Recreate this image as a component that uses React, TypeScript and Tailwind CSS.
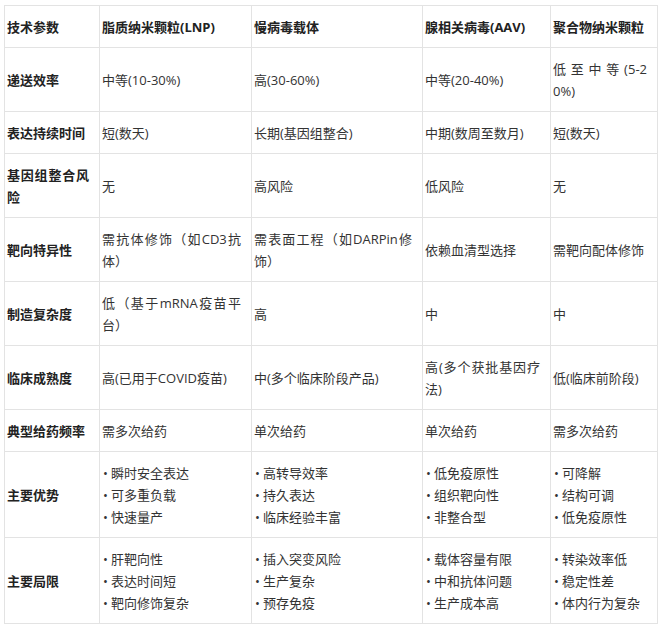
import React from 'react'

type Cell = string | string[]

interface Row {
  label: string
  cells: Cell[]
}

const headers = ['技术参数', '脂质纳米颗粒(LNP)', '慢病毒载体', '腺相关病毒(AAV)', '聚合物纳米颗粒']

const rows: Row[] = [
  { label: '递送效率', cells: ['中等(10-30%)', '高(30-60%)', '中等(20-40%)', '低至中等(5-20%)'] },
  { label: '表达持续时间', cells: ['短(数天)', '长期(基因组整合)', '中期(数周至数月)', '短(数天)'] },
  { label: '基因组整合风险', cells: ['无', '高风险', '低风险', '无'] },
  { label: '靶向特异性', cells: ['需抗体修饰（如CD3抗体）', '需表面工程（如DARPin修饰）', '依赖血清型选择', '需靶向配体修饰'] },
  { label: '制造复杂度', cells: ['低（基于mRNA疫苗平台）', '高', '中', '中'] },
  { label: '临床成熟度', cells: ['高(已用于COVID疫苗)', '中(多个临床阶段产品)', '高(多个获批基因疗法)', '低(临床前阶段)'] },
  { label: '典型给药频率', cells: ['需多次给药', '单次给药', '单次给药', '需多次给药'] },
  {
    label: '主要优势',
    cells: [
      ['瞬时安全表达', '可多重负载', '快速量产'],
      ['高转导效率', '持久表达', '临床经验丰富'],
      ['低免疫原性', '组织靶向性', '非整合型'],
      ['可降解', '结构可调', '低免疫原性'],
    ],
  },
  {
    label: '主要局限',
    cells: [
      ['肝靶向性', '表达时间短', '靶向修饰复杂'],
      ['插入突变风险', '生产复杂', '预存免疫'],
      ['载体容量有限', '中和抗体问题', '生产成本高'],
      ['转染效率低', '稳定性差', '体内行为复杂'],
    ],
  },
]

const cellBase = 'border border-[#e3e3e3] pl-[2px] pr-[10px] py-[9.5px] align-middle'

function CellContent({ value }: { value: Cell }) {
  if (Array.isArray(value)) {
    return (
      <ul>
        {value.map(item => (
          <li key={item} className="flex">
            <span className="w-[9px] shrink-0 pl-[1px]">•</span>
            <span>{item}</span>
          </li>
        ))}
      </ul>
    )
  }
  return <>{value}</>
}

export default function App() {
  return (
    <div className="bg-white min-h-[633px] pt-[5px] pl-[4px] font-['Open_Sans','Noto_Sans_CJK_SC',sans-serif] text-[13px] leading-[22px] text-[#333]">
      <table className="table-fixed border-collapse w-[653px]">
        <colgroup>
          <col className="w-[95px]" />
          <col className="w-[152px]" />
          <col className="w-[171px]" />
          <col className="w-[128px]" />
          <col className="w-[107px]" />
        </colgroup>
        <thead>
          <tr>
            {headers.map(h => (
              <th key={h} className={`${cellBase} text-left font-bold text-[#222]`}>
                {h}
              </th>
            ))}
          </tr>
        </thead>
        <tbody>
          {rows.map(r => (
            <tr key={r.label}>
              <td className={`${cellBase} font-bold text-[#222] text-justify break-all`}>{r.label}</td>
              {r.cells.map((c, i) => (
                <td key={i} className={`${cellBase} text-justify break-all`}>
                  <CellContent value={c} />
                </td>
              ))}
            </tr>
          ))}
        </tbody>
      </table>
    </div>
  )
}
